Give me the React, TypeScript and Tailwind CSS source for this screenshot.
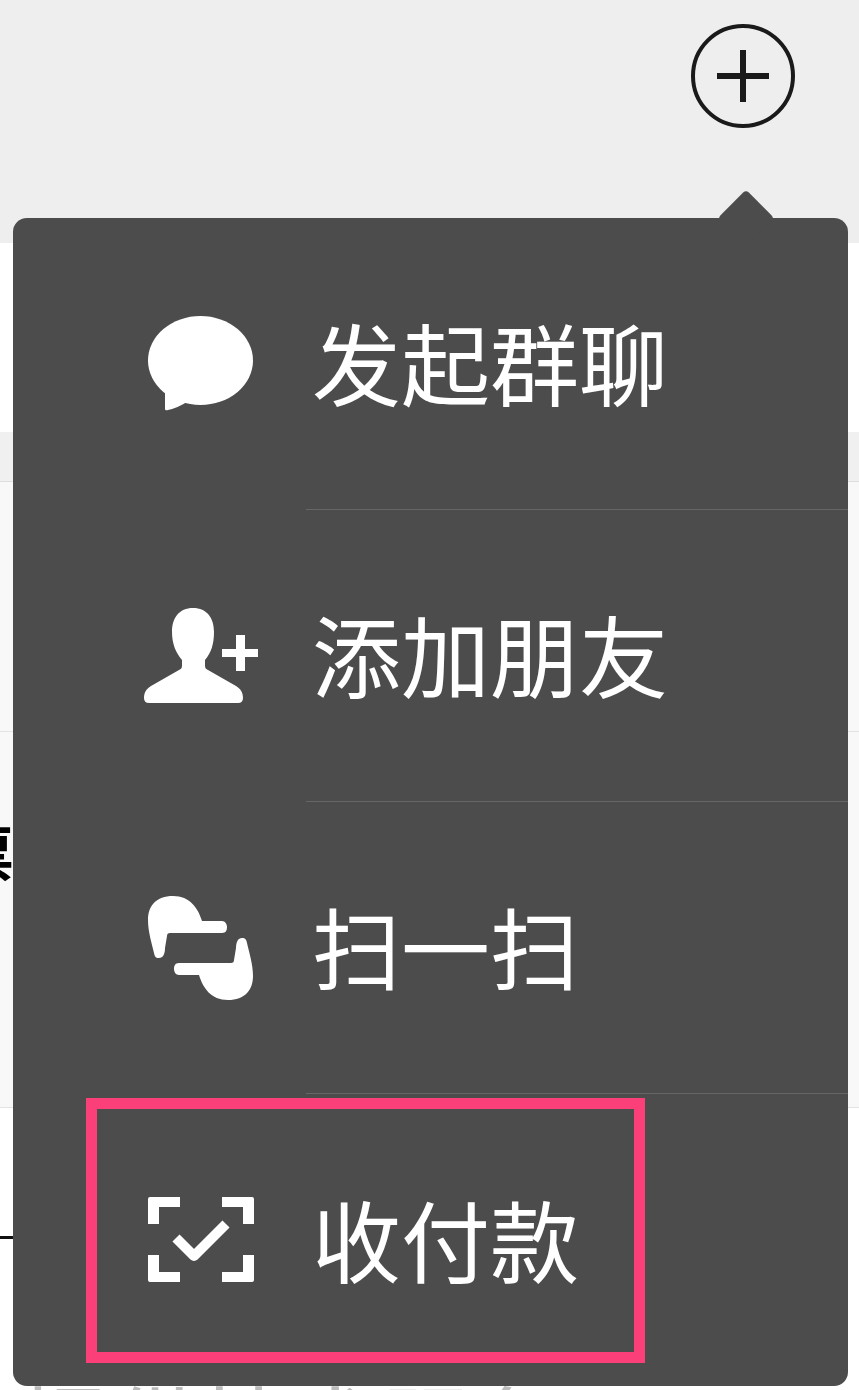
import React from 'react';

const cjk = { fontFamily: '"Noto Sans CJK SC", sans-serif' };

const ChatIcon = () => (
  <svg width="106" height="96" viewBox="0 0 106 96" fill="#fff">
    <ellipse cx="52.5" cy="44.5" rx="52.5" ry="44.5" />
    <path d="M17 74 L17 93 Q17 95 20 94 Q30 92 42 84 Z" />
  </svg>
);

const AddFriendIcon = () => (
  <svg width="116" height="96" viewBox="0 0 116 96" fill="#fff">
    <path d="M50 0 C36 0 29 10 29 24 C29 36 33 45 39 52 L39 58 C39 60 38 61 36 62 L8 78 C3 81 1 85 1 90 Q1 95 6 95 L95 95 Q100 95 100 90 C100 85 98 81 93 78 L65 62 C63 61 62 60 62 58 L62 52 C68 45 71 36 71 24 C71 10 64 0 50 0 Z" />
    <path d="M79 41 H93 V27 H102 V41 H115 V49 H102 V63 H93 V49 H79 Z" />
  </svg>
);

const handPath =
  'M25 0 C8 0 0 10 0 24 C0 36 4 48 6 57 C7 62 9 62 11 62 C15 62 17 58 17 52 L19 40 Q19 37 22 37 L74 37 C78 37 79 34 79 31 C79 28 77 25 74 25 L54 25 C50 12 42 0 25 0 Z';

const ScanHandsIcon = () => (
  <svg width="106" height="105" viewBox="0 0 106 105" fill="#fff">
    <path d={handPath} />
    <path d={handPath} transform="rotate(180 52.5 52)" />
  </svg>
);

const ReceiptIcon = () => (
  <svg width="106" height="86" viewBox="0 0 106 86" fill="#fff">
    <path d="M0 2 Q0 0 2 0 H32 V10 H11 V27 H0 Z" />
    <path d="M74 0 H104 Q106 0 106 2 V27 H95 V10 H74 Z" />
    <path d="M0 58 H11 V75 H32 V85 H2 Q0 85 0 83 Z" />
    <path d="M95 58 H106 V83 Q106 85 104 85 H74 V75 H95 Z" />
    <path d="M28 41 L46 59 L78 27" fill="none" stroke="#fff" strokeWidth="10" strokeLinejoin="round" />
  </svg>
);

const items = [
  { label: '发起群聊', icon: <ChatIcon /> },
  { label: '添加朋友', icon: <AddFriendIcon /> },
  { label: '扫一扫', icon: <ScanHandsIcon /> },
  { label: '收付款', icon: <ReceiptIcon /> },
];

export default function App() {
  return (
    <div className="relative h-[1390px] w-[859px] overflow-hidden bg-white" style={cjk}>
      {/* page behind the popover */}
      <header className="flex h-[243px] items-start justify-end bg-[#eeeeee] pr-[64px] pt-[24px]">
        <svg width="104" height="104" viewBox="0 0 104 104" fill="none" stroke="#1a1a1a">
          <circle cx="52" cy="52" r="50" strokeWidth="4" />
          <path d="M52 26 V78 M26 52 H78" strokeWidth="6" />
        </svg>
      </header>
      <div className="h-[189px] bg-white" />
      <div className="h-[50px] border-b border-[#dddddd] bg-[#f0f0f0]" />
      <div className="h-[250px] border-b border-[#e3e3e3] bg-[#f8f8f8]" />
      <div className="h-[376px] overflow-hidden border-b border-[#e3e3e3] bg-[#f8f8f8] pt-[84px] text-[60px] font-bold leading-[70px] text-black">
        <div className="-ml-[46px]">票</div>
      </div>
      <div className="pt-[128px]">
        <div className="h-[3px] w-[14px] bg-[#111111]" />
      </div>
      <div className="whitespace-nowrap pl-[20px] pt-[139px] text-[90px] leading-[90px] text-[#bbbbbb]">提供技术服务</div>

      {/* popover */}
      <div className="absolute left-[13px] top-[218px] flex w-[835px] flex-col rounded-[14px] bg-[#4c4c4c] text-white">
        <div className="absolute right-[82px] top-[-20px] h-[40px] w-[40px] rotate-45 rounded-[4px] bg-[#4c4c4c]" />
        {items.map((item, i) => (
          <div key={item.label} className="relative flex h-[292px] items-center pl-[129px]">
            <div className="flex w-[118px] shrink-0 justify-center">{item.icon}</div>
            <div
              className={`ml-[46px] flex h-full flex-1 items-center pb-[6px] pl-[6px] ${
                i < 3 ? 'border-b border-[#666666]' : ''
              }`}
            >
              <span className="text-[89px] font-normal leading-none">{item.label}</span>
            </div>
          </div>
        ))}
        {/* annotation frame */}
        <div className="absolute left-[73px] top-[880px] h-[265px] w-[559px] border-[11px] border-[#fb3f78]" />
      </div>
    </div>
  );
}
